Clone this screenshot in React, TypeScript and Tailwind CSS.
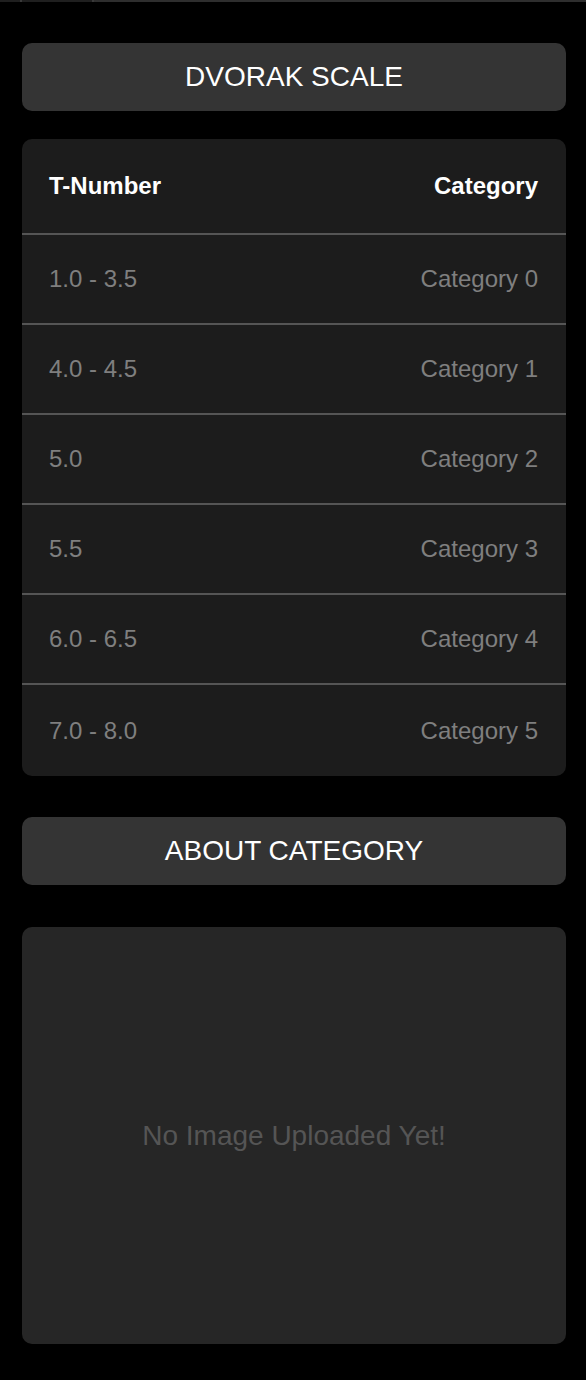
import React from "react";

const scale = [
  { t: "1.0 - 3.5", c: "Category 0" },
  { t: "4.0 - 4.5", c: "Category 1" },
  { t: "5.0", c: "Category 2" },
  { t: "5.5", c: "Category 3" },
  { t: "6.0 - 6.5", c: "Category 4" },
  { t: "7.0 - 8.0", c: "Category 5" },
];

function SectionButton({ label }: { label: string }) {
  return (
    <button className="w-full h-[68px] rounded-[10px] bg-[#343434] text-white text-[28px] flex items-center justify-center">
      {label}
    </button>
  );
}

export default function App() {
  return (
    <div
      className="w-[586px] min-h-[1380px] bg-black"
      style={{ fontFamily: '"Liberation Sans", Arial, sans-serif' }}
    >
      {/* tab strip */}
      <div className="flex h-[2px]">
        <div className="w-[20px] bg-[#1f1f1f]" />
        <div className="w-[2px] bg-[#3a3a3a]" />
        <div className="w-[70px] bg-[#1f1f1f]" />
        <div className="w-[2px] bg-[#3a3a3a]" />
        <div className="flex-1 bg-[#2e2e2e]" />
      </div>

      <div className="pl-[22px] pr-[20px] pt-[41px] pb-[36px] flex flex-col">
        <SectionButton label="DVORAK SCALE" />

        <div className="mt-[28px] rounded-[10px] bg-[#1c1c1c] overflow-hidden">
          <div className="h-[96px] pl-[27px] pr-[28px] flex items-center justify-between text-white font-bold text-[24px] border-b-2 border-[#555555]">
            <span>T-Number</span>
            <span>Category</span>
          </div>
          {scale.map((row, i) => (
            <div
              key={row.c}
              className={
                i < scale.length - 1
                  ? "h-[90px] pl-[27px] pr-[28px] flex items-center justify-between text-[#7f7f7f] text-[24px] border-b-2 border-[#555555]"
                  : "h-[91px] pl-[27px] pr-[28px] flex items-center justify-between text-[#7f7f7f] text-[24px]"
              }
            >
              <span>{row.t}</span>
              <span>{row.c}</span>
            </div>
          ))}
        </div>

        <div className="mt-[41px]">
          <SectionButton label="ABOUT CATEGORY" />
        </div>

        <div className="mt-[42px] h-[417px] rounded-[10px] bg-[#262626] flex items-center justify-center">
          <span className="text-[#555555] text-[28px]">No Image Uploaded Yet!</span>
        </div>
      </div>
    </div>
  );
}
